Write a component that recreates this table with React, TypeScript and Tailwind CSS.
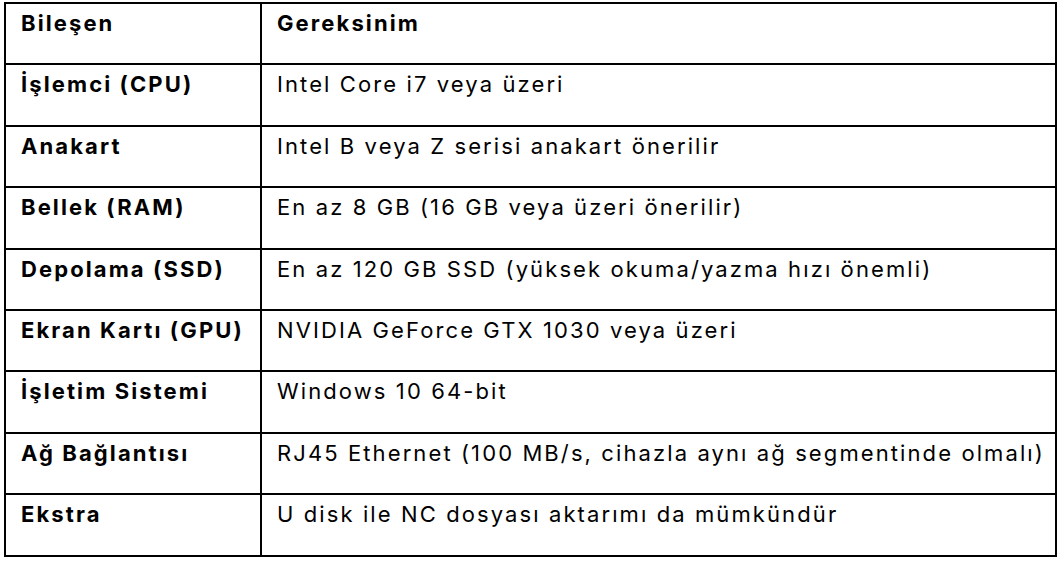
const rows: [string, string][] = [
  ['İşlemci (CPU)', 'Intel Core i7 veya üzeri'],
  ['Anakart', 'Intel B veya Z serisi anakart önerilir'],
  ['Bellek (RAM)', 'En az 8 GB (16 GB veya üzeri önerilir)'],
  ['Depolama (SSD)', 'En az 120 GB SSD (yüksek okuma/yazma hızı önemli)'],
  ['Ekran Kartı (GPU)', 'NVIDIA GeForce GTX 1030 veya üzeri'],
  ['İşletim Sistemi', 'Windows 10 64-bit'],
  ['Ağ Bağlantısı', 'RJ45 Ethernet (100 MB/s, cihazla aynı ağ segmentinde olmalı)'],
  ['Ekstra', 'U disk ile NC dosyası aktarımı da mümkündür'],
]

const cell = 'border-2 border-black align-top pl-[15px] pt-[3px] whitespace-nowrap'

export default function App() {
  return (
    <div className="w-[1064px] h-[562px] bg-white pt-[2px] pl-[4px] font-['Inter',sans-serif] text-[22px] leading-[33px] tracking-[2.1px] text-black">
      <table className="border-collapse w-[1053px] table-fixed">
        <colgroup>
          <col className="w-[256px]" />
          <col />
        </colgroup>
        <tbody>
          <tr className="h-[61.4px]">
            <td className={`${cell} font-bold`}>Bileşen</td>
            <td className={`${cell} font-bold`}>Gereksinim</td>
          </tr>
          {rows.map(([name, req]) => (
            <tr key={name} className="h-[61.4px]">
              <td className={`${cell} font-bold`}>{name}</td>
              <td className={cell}>{req}</td>
            </tr>
          ))}
        </tbody>
      </table>
    </div>
  )
}
